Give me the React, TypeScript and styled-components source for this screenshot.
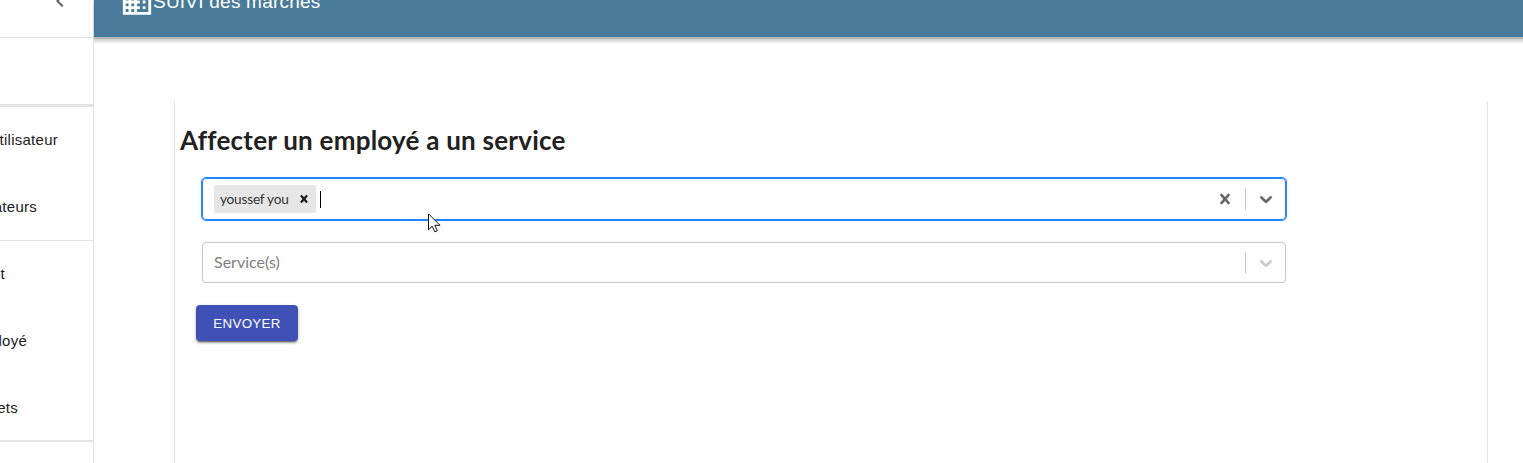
import React from 'react';
import styled, { createGlobalStyle } from 'styled-components';

const sans = '"Liberation Sans", Arial, sans-serif';

const GlobalStyle = createGlobalStyle`
  *, *::before, *::after { box-sizing: border-box; }
  body {
    margin: 0;
    overflow: hidden;
    background: #fefefe;
    color: #212121;
    font-family: Lato, sans-serif;
    font-variant-ligatures: none;
  }
`;

const Shell = styled.div`
  display: flex;
  width: 100%;
  height: 463px;
  overflow: hidden;
`;

const Drawer = styled.aside`
  display: flex;
  flex-direction: column;
  flex: none;
  width: 94px;
  border-right: 1px solid #e2e2e2;
  overflow: hidden;
`;

const DrawerHeader = styled.div`
  display: flex;
  flex: none;
  justify-content: flex-end;
  height: 38px;
  padding-right: 21px;
  border-bottom: 1px solid #e2e2e2;
  svg { margin-top: -11px; }
`;

const Group = styled.nav<{ $height: number; $rule: number }>`
  display: flex;
  flex: none;
  flex-direction: column;
  height: ${p => p.$height}px;
  border-bottom: ${p => p.$rule}px solid #e4e4e4;
`;

const Item = styled.a`
  display: flex;
  flex: none;
  align-items: center;
  justify-content: flex-end;
  height: 67px;
  padding-bottom: 2px;
  font: 15px ${sans};
  letter-spacing: .26px;
  white-space: nowrap;
`;

const ItemText = styled.span<{ $end: number }>`
  flex: none;
  margin-right: ${p => p.$end}px;
`;

const Main = styled.main`
  display: flex;
  flex: 1;
  flex-direction: column;
  min-width: 0;
`;

const AppBar = styled.header`
  display: flex;
  flex: none;
  height: 37px;
  padding-left: 26px;
  background: #487a99;
  color: #fff;
  box-shadow: 0 2px 1px rgba(0, 0, 0, .16), 0 4px 1px rgba(0, 0, 0, .08), 0 6px 1px rgba(0, 0, 0, .07);
  svg { flex: none; margin-top: -15px; }
`;

const AppTitle = styled.div`
  margin-top: -10px;
  margin-left: -1px;
  font: 19px/24px ${sans};
  letter-spacing: .23px;
`;

const Panel = styled.section`
  flex: 1;
  margin: 64px 35px 0 80px;
  padding: 22px 201px 0 5px;
  border: solid #e4e4e4;
  border-width: 0 1px;
`;

const Heading = styled.h1`
  margin: 0 0 20px;
  font-size: 26px;
  font-weight: 700;
  line-height: 35px;
  letter-spacing: .23px;
`;

const Fields = styled.div`
  display: flex;
  flex-direction: column;
  gap: 22px;
  padding-left: 22px;
`;

const Control = styled.div<{ $focused?: boolean }>`
  display: flex;
  align-items: center;
  height: ${p => (p.$focused ? 42 : 41)}px;
  border: 1px solid ${p => (p.$focused ? '#2684ff' : '#c8c8c8')};
  border-radius: 4px;
  box-shadow: ${p => (p.$focused ? '0 0 0 1px #2684ff' : 'none')};
`;

const Value = styled.div`
  display: flex;
  flex: 1;
  align-items: center;
  padding-left: 11px;
`;

const Chip = styled.div`
  display: flex;
  align-items: center;
  height: 28px;
  padding: 0 5px 0 6px;
  border-radius: 2px;
  background: #e6e6e6;
  color: #333;
  font-size: 13.6px;
  letter-spacing: -.2px;
  gap: 8px;
  svg { color: #161616; stroke: currentColor; stroke-width: 1; }
`;

const Caret = styled.span`
  width: 1px;
  height: 17px;
  margin-left: 4px;
  background: #000;
`;

const Placeholder = styled.span`
  padding-bottom: 2px;
  color: #808080;
  font-size: 16px;
`;

const Indicator = styled.span<{ $dim?: boolean }>`
  display: flex;
  padding: 0 10px;
  color: ${p => (p.$dim ? '#c8c8c8' : '#666')};
  stroke: currentColor;
  stroke-width: .4;
  &:last-child { padding-right: 9px; }
`;

const Separator = styled.span`
  align-self: stretch;
  width: 1px;
  margin: 9px 0;
  background: #c8c8c8;
`;

const Submit = styled.button`
  display: block;
  width: 102px;
  height: 36px;
  margin: 22px 0 0 16px;
  padding: 0;
  border: 0;
  border-radius: 4px;
  background: #3f51b5;
  color: #fff;
  font: 13.3px ${sans};
  letter-spacing: .35px;
  box-shadow: 0 3px 1px -2px rgba(0, 0, 0, .3), 0 2px 2px rgba(0, 0, 0, .3), 0 1px 4px rgba(0, 0, 0, .12);
`;

const Pointer = styled.svg`
  position: absolute;
  left: 428px;
  top: 213px;
`;

const Cross = ({ size }: { size: number }) => (
  <svg width={size} height={size} viewBox="0 0 20 20" fill="currentColor">
    <path d="M14.348 14.849c-0.469 0.469-1.229 0.469-1.697 0l-2.651-3.030-2.651 3.029c-0.469 0.469-1.229 0.469-1.697 0-0.469-0.469-0.469-1.229 0-1.697l2.758-3.15-2.759-3.152c-0.469-0.469-0.469-1.228 0-1.697s1.228-0.469 1.697 0l2.652 3.031 2.651-3.031c0.469-0.469 1.228-0.469 1.697 0s0.469 1.229 0 1.697l-2.758 3.152 2.758 3.15c0.469 0.469 0.469 1.229 0 1.698z" />
  </svg>
);

const Chevron = () => (
  <svg width="20" height="20" viewBox="0 0 20 20" fill="currentColor">
    <path d="M4.516 7.548c0.436-0.446 1.043-0.481 1.576 0l3.908 3.747 3.908-3.747c0.533-0.481 1.141-0.446 1.574 0 0.436 0.445 0.408 1.197 0 1.615-0.406 0.418-4.695 4.502-4.695 4.502-0.217 0.223-0.502 0.335-0.787 0.335s-0.57-0.112-0.789-0.335c0 0-4.287-4.084-4.695-4.502s-0.436-1.17 0-1.615z" />
  </svg>
);

export default function App() {
  return (
    <>
      <GlobalStyle />
      <Shell>
        <Drawer>
          <DrawerHeader>
            <svg width="24" height="24" viewBox="0 0 24 24" fill="#666">
              <path d="M15.41 7.41 14 6l-6 6 6 6 1.41-1.41L10.83 12z" />
            </svg>
          </DrawerHeader>
          <Group $height={69} $rule={3} />
          <Group $height={134} $rule={1}>
            <Item><ItemText $end={35}>Ajouter utilisateur</ItemText></Item>
            <Item><ItemText $end={56}>Utilisateurs</ItemText></Item>
          </Group>
          <Group $height={201} $rule={2}>
            <Item><ItemText $end={88}>Projet</ItemText></Item>
            <Item><ItemText $end={66}>Employé</ItemText></Item>
            <Item><ItemText $end={75}>Projets</ItemText></Item>
          </Group>
        </Drawer>
        <Main>
          <AppBar>
            <svg width="34" height="34" viewBox="0 0 24 24" fill="currentColor">
              <path d="M12 7V3H2v18h20V7H12zM6 19H4v-2h2v2zm0-4H4v-2h2v2zm0-4H4V9h2v2zm0-4H4V5h2v2zm4 12H8v-2h2v2zm0-4H8v-2h2v2zm0-4H8V9h2v2zm0-4H8V5h2v2zm10 12h-8v-2h2v-2h-2v-2h2v-2h-2V9h8v10zm-2-8h-2v2h2v-2zm0 4h-2v2h2v-2z" />
            </svg>
            <AppTitle>SUIVI des marchés</AppTitle>
          </AppBar>
          <Panel>
            <Heading>Affecter un employé a un service</Heading>
            <Fields>
              <Control $focused>
                <Value>
                  <Chip>youssef you<Cross size={14} /></Chip>
                  <Caret />
                </Value>
                <Indicator><Cross size={20} /></Indicator>
                <Separator />
                <Indicator><Chevron /></Indicator>
              </Control>
              <Control>
                <Value><Placeholder>Service(s)</Placeholder></Value>
                <Separator />
                <Indicator $dim><Chevron /></Indicator>
              </Control>
            </Fields>
            <Submit>ENVOYER</Submit>
          </Panel>
        </Main>
      </Shell>
      <Pointer width="13" height="20" viewBox="0 0 13 20">
        <path d="M.5.8v16l3.7-3.6 2.6 5.6 2.5-1.1-2.5-5.4H12z" fill="#fff" stroke="#111" />
      </Pointer>
    </>
  );
}
